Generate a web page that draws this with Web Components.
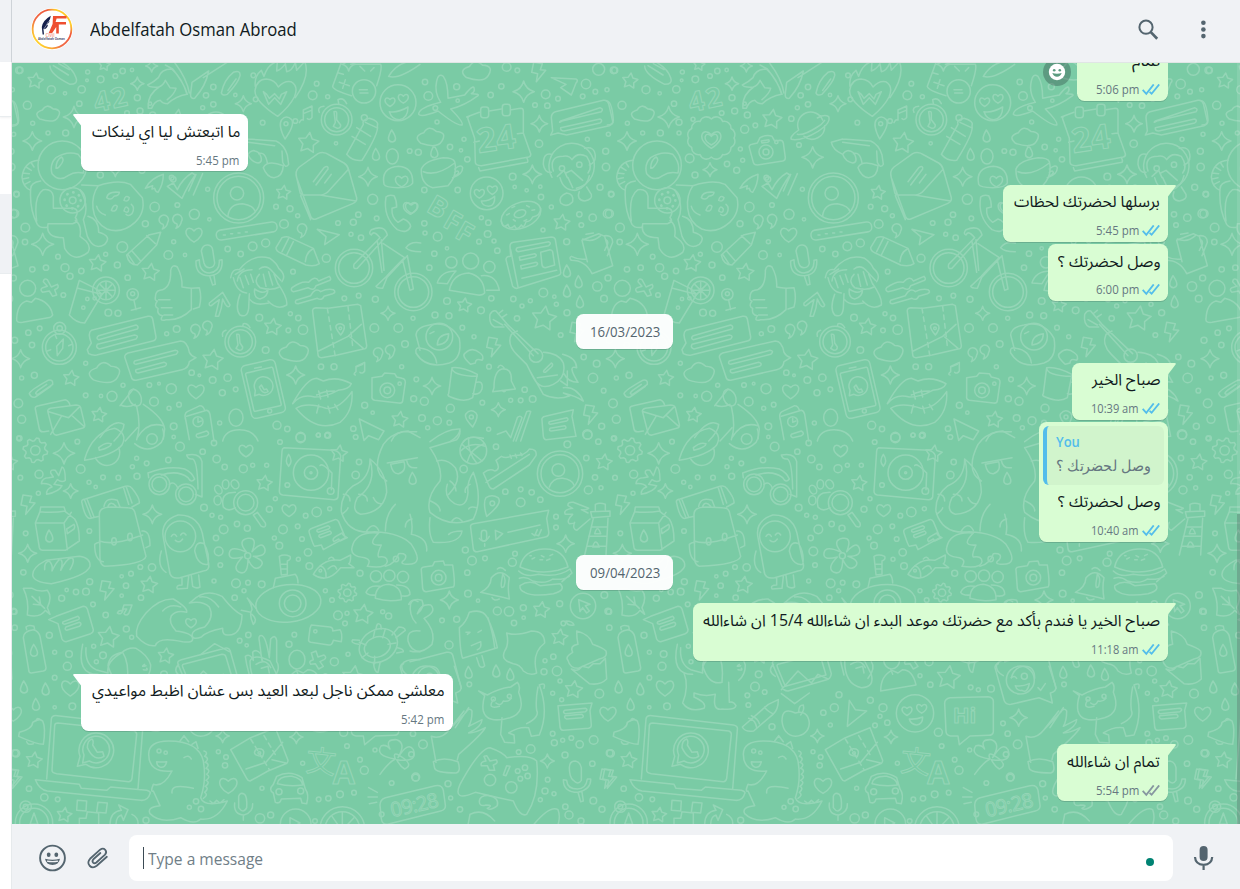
<!DOCTYPE html>
<html lang="en">
<head>
<meta charset="utf-8">
<title>Chat</title>
<style>
    html, body {
        margin: 0;
        height: 100%;
        overflow: hidden;
        font-family: "Open Sans", "Noto Sans", sans-serif;
        color: #111b21;
    }
</style>
</head>
<body>
<chat-app></chat-app>

<script>
const define = (name, html, setup) => {
    customElements.define(name, class extends HTMLElement {
        constructor() {
            super();
            this.attachShadow({ mode: 'open' });
        }

        connectedCallback() {
            this.shadowRoot.innerHTML = typeof html === 'function' ? html(this) : html;
            if (setup) setup(this, this.shadowRoot);
        }
    });
};

// ---------- wallpaper ----------

const n = (v) => Math.round(v * 10) / 10;

const star = ([x, y, r]) => {
    let d = '';
    for (let i = 0; i < 10; i++) {
        const a = (i * 36 - 82) * Math.PI / 180;
        const k = i % 2 ? r * 0.52 : r;
        d += (i ? 'L' : 'M') + n(x + k * Math.cos(a)) + ' ' + n(y + k * Math.sin(a));
    }
    return d + 'Z';
};

const spark = ([x, y, r]) => {
    const k = r * 0.2;
    return `M${x} ${y - r}Q${x + k} ${y - k} ${x + r} ${y}Q${x + k} ${y + k} ${x} ${y + r}Q${x - k} ${y + k} ${x - r} ${y}Q${x - k} ${y - k} ${x} ${y - r}Z`;
};

const heart = ([x, y, r]) =>
    `M${x} ${y + r * 0.9}C${x - r * 1.6} ${y} ${x - r * 0.8} ${y - r * 1.3} ${x} ${y - r * 0.4}C${x + r * 0.8} ${y - r * 1.3} ${x + r * 1.6} ${y} ${x} ${y + r * 0.9}Z`;

const bolt = ([x, y]) => `M${x - 14} ${y - 26}l26 4l-6 18l16 2l-28 34l4-24l-18-4z`;

const drop = ([x, y]) => `M${x} ${y - 18}q22 32 2 36q-22-2-2-36z`;

const cloud = ([x, y, r]) =>
    `M${x - r * 0.7} ${y + r * 0.45}q${-r * 0.6} ${-r * 0.5} ${r * 0.2} ${-r * 0.75}q${r * 0.35} ${-r * 0.6} ${r * 0.9} ${-r * 0.1}q${r * 0.8} ${r * 0.05} ${r * 0.4} ${r * 0.7}q${-r * 0.3} ${r * 0.55} ${-r * 1.5} ${r * 0.15}z`;

const quote = ([x, y]) => `M${x - 4} ${y + 8}a14 14 0 1 1 14-6q-2 14-16 20q6-8 2-14z`;

const gear = ([x, y, r]) => {
    let d = '';
    for (let i = 0; i < 32; i++) {
        const a = (i + 0.5) * Math.PI / 16;
        const k = i % 4 < 2 ? r : r * 0.78;
        d += (i ? 'L' : 'M') + n(x + k * Math.cos(a)) + ' ' + n(y + k * Math.sin(a));
    }
    return d + 'Z';
};

const badge = ([x, y, r]) => {
    let d = `M${x + r} ${y}`;
    for (let i = 1; i <= 12; i++) {
        const a = i * Math.PI / 6;
        d += `A${n(r * 0.3)} ${n(r * 0.3)} 0 0 1 ${n(x + r * Math.cos(a))} ${n(y + r * 0.84 * Math.sin(a))}`;
    }
    return d + 'Z';
};

const list = (s) => s.trim().split(/\s+/).map((t) => t.split(',').map(Number));

const section = (x, y, s) => {
    const dots = list(s.dots).map(([cx, cy, r]) => `<circle cx="${cx}" cy="${cy}" r="${r}"/>`).join('');
    const kinds = [['stars', star], ['sparks', spark], ['hearts', heart], ['bolts', bolt], ['drops', drop], ['clouds', cloud], ['quotes', quote], ['gears', gear], ['badges', badge]];
    const d = kinds.map(([key, fn]) => s[key] ? list(s[key]).map(fn).join('') : '').join('');
    return `<g transform="translate(${x} ${y})">${dots}<path d="${d}"/>${s.art}</g>`;
};

const doodles = [
    section(0, 180, {
        dots: `60,28,9 154,86,12 82,133,12 98,187,6 238,128,8 263,33,6 302,55,10 346,45,7 368,30,8 195,97,5 261,58,4 245,85,11
            396,27,5 412,110,9 420,150,9 450,128,5 618,103,8 640,78,8 640,130,8 706,102,5 760,43,7 767,115,7 788,185,7 950,68,7
            938,103,13 983,107,6 886,180,7 197,216,9 144,216,6 1008,247,5 1093,170,9 1229,270,7 464,438,14 532,432,7 583,460,15
            628,475,5 436,488,9 76,500,13 44,458,12 50,400,8 75,543,8 367,558,16 317,580,6 174,587,7 195,620,12 138,620,8 97,625,8
            210,646,9 244,630,8 352,612,9 505,582,13 555,582,5 521,542,6 383,650,8 683,564,8 722,579,8 758,556,13 797,546,12
            852,489,13 828,437,7 870,443,9 893,464,6 1118,415,15 1075,461,8 1130,472,7 1014,486,7 1053,520,6 1060,484,9 1083,530,8
            879,632,7 979,592,12 190,702,7 325,755,10 354,757,9 119,802,7 85,815,8 96,852,8 44,838,9 500,818,6 530,804,10
            778,770,10 871,758,6 895,771,8 865,808,7 909,806,14 797,867,10 1033,712,7 1076,704,7 1126,715,9 1123,801,13
            1195,801,13 1215,849,10 1205,917,6 963,917,8 1002,917,9 575,935,8 598,943,4 638,957,10 683,950,11 448,972,7 477,968,4
            514,983,15 336,1006,15 303,1005,5 257,1003,7 369,973,6 257,907,6 103,943,9 65,951,6 462,1022,13 507,1042,6 537,1031,7
            667,995,9 707,985,7 659,1086,6 521,1096,10 55,1027,13 65,1075,12 58,1132,8 831,1093,12 862,1104,8 1094,1033,9
            1118,1055,5 1060,1103,8 955,1123,6 982,1123,7 902,1128,14 1241,1013,9 301,342,9 520,355,8 623,385,6
            253,184,9 253,216,6 295,175,6 381,156,7 458,162,9 482,193,7 450,205,12 437,264,6 444,298,6 397,309,8 426,328,9
            285,292,13 590,173,8 613,252,7 515,350,7 608,140,6`,
        stars: '106,60,24 925,246,32 850,395,22 292,607,26 451,634,27 818,798,26 638,897,32 213,952,24 297,1062,23 1199,1076,25 313,12,18 532,175,30',
        sparks: '412,68,20 730,128,24 97,240,28 1104,347,28 128,550,33 62,893,27 1164,757,21 887,942,27 455,15,18 1046,10,20 222,168,32 346,326,21 654,289,32',
        hearts: '582,520,26 588,990,26 1231,440,22 1205,360,20 1170,122,16 1210,112,16 350,234,31 350,234,20',
        badges: '350,231,68',
        drops: '1175,225 1127,280',
        clouds: '145,158,36 314,935,48 882,872,46',
        quotes: '493,482 534,480 588,810 624,800 908,508 1136,880 1172,872',
        art: `
            <text x="280" y="144" font-size="82" textLength="100" transform="rotate(-12 330 110)">42</text>
            <path d="M464 260q-2-8 8-10l16-4l8-16q20-10 36-4l8 14l16-2q8 0 10 8l6 44q0 8-8 10l-76 12q-10 0-12-8zM500 240l22-4q4 6-4 8l-16 2z"/><circle cx="514" cy="273" r="21"/><circle cx="514" cy="273" r="9"/><circle cx="545" cy="243" r="5"/>
            <path d="M612 207a38 38 0 0 1 72-30M690 194a38 38 0 0 1-62 32M612 207q-28 20-22 28q30 6 80-24q40-26 32-44q-12-8-34 4M608 220q20 4 60-22q14-8 22-20"/>
            <path d="M150 15q0 25 60 55q25 0 18-20q-10-30-50-50M160 14l45 28M176 8l32 18"/>
            <path d="M445 142q-4-40 32-64q-30 2-34-6q20-10 32-22q8-26 40-26q32 28 46 76q-34 6-58 28q-16 0-22-10q-18 2-26 24zM496 12l22 12q34 42 44 76M520 0q40 50 48 96M476 78q14-4 20-20l14 22l18 2q-4 16-26 34"/>
            <path d="M572 98l4-34l50-34q-8 44-42 82q-14 2-12-14zM610 50l70-45M664 96q8-40 36-62q22-8 20 10q-4 20-38 56q-14 6-18-4zM684 88l24-34"/>
            <path d="M833 166q-70-46-68-78q6-34 34-34q26 2 36 24q18-20 38-16q24 14 10 46q-14 28-50 58zM766 76q-4-30 18-48l8 18q12-38 40-44l-2 28q14-4 26-22l4 24q16-2 26-28l4 24l24-26q18 40-28 108M790 92l16 38l18-20l18 20l18-38l-16 8l-6 14l-14-16l-16 14l-8-12z"/>
            <path d="M1024 4l-26 72q2 12 56 28M1052 10l90 0q6 12-12 64M1016 36l14 4M1018 64l30 10M1036 56l-8 26M1080 16l14 14M1112 30l10-10M1078 86h24M1080 96h24"/><circle cx="1092" cy="91" r="35"/>
            <path d="M1166 46q30-50 90-46M1166 46q30 10 94-36"/>
            <circle cx="1194" cy="125" r="54"/><path d="M1168 152q26 4 56-14q0 34-26 38q-22 0-30-24z"/>
            <circle cx="1010" cy="176" r="46"/><circle cx="1010" cy="176" r="36"/><path d="M1002 152q8-2 8 4l0 20l12 16q0 10-10 10l-12-6l6-12zM958 154q-8-16 14-18M1016 128l-2-12q16-8 26 12"/>
            <path d="M898 185q6-12 12-8v-30l26-12v34q-6 10-14 4M910 158l24-10"/><path d="M855 234q-22-42-10-58q14-16 30 0q10 16-20 58z"/><circle cx="858" cy="188" r="6"/>
            <path d="M36 120q16 0 20 58q0 14-18 14"/>
            <path d="M1040 280l50-90q-6-14 18-18q30 8 24 22q6 20-46 104q-28 4-46-18zM1056 226l40 24M1070 200l42 26M1096 184l34 16"/><ellipse cx="1177" cy="286" rx="18" ry="23"/>
            <path d="M1152 370q-10-50 44-54q44 4 42 50q-6 14-44 14t-42-10z"/>
            <path d="M1158 408q-10 60 34 98q30 14 40-10q-2-14-22-22l-16 10q-20-14-18-42l14-4q0-20-8-34q-16-4-24 4z"/>
            <circle cx="187" cy="313" r="73"/><path d="M156 338q-8-28 12-48q34-22 66-10q24 26 16 56q-26-6-46 8q-26 20-48-6zM168 322q0-24 16-34q12 8-4 26q-4 8-12 8zM116 298q-44 4-50 50q2 30 26 40M94 306l8 12M78 318l16 10M68 336l20 2M68 354l18-4M74 370l16-8M92 384q0-20 30-24M92 384q-4 62 20 106q10 14 32 8M110 480q-10-74 20-94q26-4 30 20l0 36l60 0q20 4 6 28q12 12-8 18h-74M144 490q-8 40 46 40l4 32q26 46 70 12q10-16-6-34l-18-14q6-34-14-48M240 386q30 50 10 90l12 50q20 44 52 24q24-24-18-36q0-40-32-48"/>
            <circle cx="218" cy="418" r="38"/><circle cx="218" cy="418" r="10"/><circle cx="218" cy="418" r="24" stroke-width="8" stroke-dasharray="1 18"/>
            <path d="M245 372l50 2q60-20 96-4l36 40q10 44-22 74q-40 36-84 20q-38-20-42-62q-4-40 16-68M320 410q4-20 38-16q0 10-16 12q-10 14-22 4zM290 436q4 18 26 26M334 448q8-22 18-12q-4 20-18 12zM372 418q4-18 16-8q-2 14-16 8zM372 450q4-20 14-6q0 16-14 6zM394 430q12 10 2 28q-12 10-18 2"/>
            <path d="M436 382q16-30 54-42q0 30-16 54q-8-2-10-12l-8 2l2-10zM502 376l18-10l12 20q16-34 44-50l10 6q-22 30-40 70zM566 390l22-50M580 402l28-64"/>
            <circle cx="716" cy="411" r="75"/><circle cx="716" cy="411" r="65"/><circle cx="711" cy="397" r="20"/><path d="M684 464q4-36 44-36q34 6 38 24"/>
            <path d="M744 234l84 6q24 10 34 42l4 28q-10 14-18-6l-2-34M744 244l80 10M744 280q12-20 34-4q14 28-4 30q-22-4-30-26zM744 280q-30-14-34-36l34-10M790 320q12-24 60-6q-2 34-28 36q-22-2-32-30zM776 278q20-8 26 28"/>
            <path d="M890 350q-6-20 8-32l56-40q16-8 34 4l44 24q10 6 14 20l24 84q2 12-12 18l-110 46q-10 4-16-8zM890 350l10 44q2 10 16 8l48 0q14-2 24-14l56-62M902 404l30 72M960 402l108 18M940 362l32-42q14-8 12 4l-36 48M974 366l20-26"/>
            <rect x="648" y="495" width="184" height="30" rx="14" transform="rotate(-9 740 510)"/><path d="M670 522h6M692 518h6M714 516h6M736 513h6"/>
            <path d="M380 582l66-60l36-8l-12 38l-58 60q-26 0-32-30zM396 570l26 30M440 524l26 24M384 580l20 30"/>
            <path d="M952 505l66 16l-44 30l4-24zM828 560l18-30q14-6 24 0l70 32l18 46q-14 10-40 4l-76-36q-14-6-14-16zM846 572l20-40M860 582l20-40M916 602q2-28 22-38"/>
            <path d="M604 570q4-20 20-18q12 2 14 14l6 40q-2 14-16 14q-12 0-16-14zM588 600q-2 46 42 44q40-4 36-48l-8 2q2 34-30 38q-30-2-30-40zM630 648l8 24l8-2l-4-26"/>
            <path d="M466 710q0-20 14-22q34-4 32-60q4-20 20-10q16 30 14 60q16 2 28 4l0 64q-34 34-76 30q-22 6-10-12q-18-2-14-22q-14-6-2-22q-8-2-6-10zM484 740h32M492 762h26M476 716h34M574 682l24-2q8 30 0 58l-18 6"/>
            <path d="M628 726l40-32l22 38q-4 12-14-2l-8-16q-2 26-12 52h-10l12-50q-14 10-24 18q-8 2-6-8z"/>
            <path d="M692 650q4-28 26-24q40-50 92-34q20 14 26 30q24 20 10 40M706 640l26-16M712 660q4-34 44-34M778 624q20-16 40 8l24 26M700 650q10 44 40 46M720 650l10 30M736 644l10 26M752 640l8 24M790 640l8 36M806 632l12 40M822 640l12 30M778 640q-20 20 2 40q36 10 58-2M764 684q30 20 40 0q0 24-24 30q-20-4-16-30zM720 700q-16 44 0 62q22 10 26-20l2-44M804 720q28 30 56 12q4-20-26-64M750 716q14 20 56 10"/>
            <path d="M876 680q30-22 50-16q20-22 30-4l32-14q10 10-4 14l-36 14q-6 18-24 6q-34 10-44 12q-10-4-4-12zM888 718l44-14q14-26 30-12q20-10 38-6q10 8-2 12l-26 8q-6 14-20 6l-58 16q-12 0-6-10z"/>
            <circle cx="1062" cy="621" r="56"/><circle cx="1062" cy="621" r="46"/><circle cx="1240" cy="693" r="56"/><circle cx="1240" cy="693" r="46"/><path d="M1062 610l78-80q-20-24-26-8q-10-4 0-16q40-16 48 16l-90 100q-14 4-10-12zM1132 542l14 92M1144 536l8 92M1150 548l64 42q-40 40-54 56M1160 650l62-66l18 100l-10 4l-22-90M1218 560q14-20 44-14M1218 560q10 12 44 12M1128 676l36-34l-16 40q-18 0-20-6z"/>
            <circle cx="83" cy="682" r="24"/><path d="M50 774q2-46 30-54l14 4l12-12q44 10 52 50q-4 8-14 8l-76 14q-20 2-18-10z"/>
            <path d="M142 656l12 22l18-8q8 10-8 16l6 16l-12 4l-10-16l-20 4q-10-8 0-14l14-4l-12-14q2-12 12-6z"/>
            <path d="M238 658l-30 104q20 24 46 24l52-86l-20-18zM234 682l70 18"/><circle cx="250" cy="740" r="5"/><circle cx="262" cy="714" r="5"/><circle cx="284" cy="712" r="5"/><circle cx="318" cy="688" r="40"/><circle cx="318" cy="688" r="28"/><path d="M318 662v52M292 688h52M300 670l36 36M336 670l-36 36"/>
            <circle cx="398" cy="700" r="17"/><circle cx="398" cy="698" r="6"/><path d="M402 718l6 28M394 748l28-8"/>
            <circle cx="178" cy="859" r="51"/><circle cx="178" cy="859" r="41"/><circle cx="179" cy="802" r="18"/><circle cx="179" cy="802" r="8"/><path d="M172 884l-2-28l20-22l-2 28zM142 870l10-4M216 850l-10 4M166 824l4 8"/>
            <path d="M266 878l-4-12l12-20q-12-30 0-38l170-42q12-2 14 8l10 54q0 10-10 12l-168 42q-12 2-24-4zM296 824l112-32q10 4 4 12l-116 32q-10-4 0-12zM292 850l112-28q14 2 4 12l-110 30q-12-4-6-14z"/>
            <path d="M376 894q-6-12 8-18l158-36q20 0 26 34q6 12 20 16l-20 12q-2 20-22 24l-138 32q-12 0-14-10zM404 900l122-32q14 2 2 12l-120 30q-10-2-4-10zM408 926l84-22q14 4 2 12l-80 20q-10-2-6-10z"/>
            <circle cx="721" cy="842" r="46"/><circle cx="721" cy="842" r="36"/><path d="M710 820q8-2 8 4l2 22l8 12q0 10-10 10l-10-6l6-10zM668 826q-4-14 10-18M728 796l2-8q12-2 20 12"/>
            <path d="M938 752q-2-10 10-12l36 2l90-12l8 4l18 120q0 10-10 10l-78 18l-48 8q-10 0-10-10zM956 870l88-44l40-36M1050 828l40 34M1022 822q-20-24-12-30q12-8 22 2q4 10-10 28z"/><path d="M982 742l24 146M1044 736l14 120" stroke-dasharray="14 12"/><circle cx="1021" cy="802" r="4"/>
            <rect x="738" y="903" width="104" height="162" rx="14" transform="rotate(-13 790 984)"/><rect x="748" y="926" width="84" height="118" rx="4" transform="rotate(-13 790 984)"/><path d="M764 1004l2-16a28 28 0 1 1 12 12zM778 978q10 24 26 14l-4-8l-8 2l-8-14z"/><circle cx="809" cy="1050" r="6"/><path d="M764 922l20-4"/>
            <path d="M878 1028q42-76 72-76l20 8q40-16 84 8q-6 16-40 20q-36 20-70 20q-40-12-66 20zM888 1042q32-20 90 0q40 4 78-50q4 60-36 92q-70 34-132-42zM950 1002q20-12 54-12M956 990l6 24M980 988l4 20M956 1032l-6 24M984 1036l6 20M1004 1030l10 16"/>
            <path d="M88 998q2-10 56-40q16-4 14 12l-44 30q-14 0 0-12l26-18M88 998q6 14 18 10l46-32"/><path d="M106 1044q-2-8 10-10l80-18q12 4 14 18M106 1044l12 60q2 10 14 8l14-2M144 1054q-4-8 8-12l76-10q10 0 14 8l12 50q2 10-8 12l-74 20q-8 2-12-6zM146 1052l60 18l34-34M152 1120l32-54M252 1096l-38-34"/>
            <ellipse cx="405" cy="1010" rx="18" ry="26" transform="rotate(-24 405 1010)"/><path d="M360 1034l40-50M362 1032q20 10 44-2M410 1036q14 60 0 100M430 1030q60 40 64 74l-4 30M300 1130q40-60 72-40q0 20-30 50M412 1130q30-50 78-36"/>
            <path d="M556 1074q-4-16 6-22l38-18q10 0 14 14M560 1066l60-18q8 2 10 12l12 80M556 1070l12 66"/><circle cx="594" cy="1082" r="15"/><path d="M590 1120l30-10q12 8 0 14l-26 6q-8-4-4-10zM594 1072v12l10-4"/>
            <path d="M1116 950l30-4l8-10l30 2l6 10l16 4q10 2 10 12l-8 56q-2 8-12 6l-72-8q-10-2-8-14z"/><circle cx="1162" cy="988" r="22"/><circle cx="1162" cy="988" r="10"/><circle cx="1199" cy="968" r="5"/><path d="M1066 942q-8-2 2-10v-16l26-12v26q-6 10-14 4M1068 918l20-8M1078 1074l74 36l-16 26l-30-12l-14 14z"/>
            <ellipse cx="708" cy="1070" rx="21" ry="26"/><path d="M668 1140q8-34 50-34t56 34M1174 1140q12-30 50-30l36 20"/>`
    }),
    section(0, 1290, {
        dots: `57,22,6 232,32,7 242,114,13 117,130,12 61,140,7 267,154,6 287,168,5 309,139,7 355,140,7 397,107,6 410,82,6 411,136,9
            440,97,7 505,87,8 521,18,5 540,47,13 608,62,8 642,36,8 650,84,11 674,108,8 730,113,12 758,103,6 800,103,6 840,33,7
            902,21,14 955,12,6 983,13,9 1077,93,8 1067,132,11 1067,18,7 826,203,6 115,187,6 612,230,10 636,253,6 662,259,6
            671,295,13 711,279,8 742,292,9 648,321,8 656,361,13 661,402,7 849,295,13 893,286,7 808,235,9 917,254,7 950,243,14
            989,233,6 823,321,6 838,344,10 906,324,7 924,364,11 895,385,6 928,405,10 77,307,7 268,300,7 421,408,7 456,409,11
            393,428,7 365,436,5 378,464,8 365,494,5 423,500,8 269,452,9 258,482,10 228,483,8 200,477,5 185,502,9 70,424,8
            279,520,7 317,552,8 379,594,9 395,619,6 148,613,9 164,664,6 207,669,10 202,706,12 281,646,6 309,673,10 289,692,6
            164,740,7 164,829,5 217,826,10 642,450,6 708,457,13 744,455,7 785,460,10 704,500,8 732,479,6 745,612,8 719,629,7
            740,643,5 883,611,7 867,640,9 1003,692,12 1044,670,6 1014,553,13 1041,547,6 1035,577,7 976,479,6 996,507,7
            1080,427,9 1188,384,8 1148,542,6 1166,555,9 43,542,8 44,590,8 48,967,11 87,1073,8 133,1099,11 173,1105,7 655,962,6
            678,978,7 675,1003,8 908,997,6 1041,945,7 1080,986,7 1125,957,6 1093,1018,12 1062,1085,7 1020,1090,10 985,1102,8
            956,1105,7 786,1072,6 780,1162,14 812,1152,9 588,1111,8 603,1134,8 568,1129,6 438,1168,9 1175,1056,7 1247,1040,10
            945,1170,7 1145,1150,7 481,767,13 510,783,7 458,793,7 461,822,7 532,887,9 733,791,9 719,830,12 686,845,8 707,882,6
            827,808,9 865,830,12 856,856,6 878,875,8 841,883,7 1031,904,12 976,734,6 1007,761,8 492,730,10 1128,769,7 1151,776,6
            1189,773,10 1225,877,7 1239,908,8`,
        stars: '793,157,24 447,462,26 325,619,33 497,675,24 1089,550,30 102,988,25 193,1152,23 1017,68,26 1061,740,36',
        sparks: '192,67,32 212,180,22 457,250,28 83,367,27 668,915,20 889,918,20 1272,860,26',
        hearts: '867,237,22 211,770,28 685,1062,28 738,58,22 573,575,17 937,839,16 981,832,16',
        bolts: '83,218 320,475 44,1040',
        drops: '71,768 136,774 107,820 147,315 101,658 1237,142',
        gears: '106,58,37 1042,485,28',
        art: `
            <circle cx="106" cy="58" r="14"/><circle cx="1042" cy="485" r="11"/>
            <path d="M254 84q24-80 90-92q40 16 22 50q-24 30-112 46zM296 50q20-18 38-12q0 10-36 20zM286 80a38 38 0 0 0 70-30M376 30l36-40M404 38q40 34 80-4q12-20 4-40"/><circle cx="456" cy="24" r="16"/>
            <path d="M152 126q-2-12 14-8l10 16l10-26q10 2 10 40q-10 8-24-2l-10 14l24 4q-8 18-46 26q-2-16 16-22q-8-12-32-10q2-18 22-18l14-2z"/>
            <path d="M122 228l70 0l4 12q-36 6-76 2zM120 242l-14 34l12 74q2 8 10 8l68 0l42-28q0-46-14-66l-28-22M106 276h86l22-32M192 276l10 80M200 294l22-14q4 6 0 14l-20 14z"/>
            <path d="M246 216q-4-10 10-12l120-38q14-4 20 6q24 30 22 44l-22 12M246 216q10 50 26 46l26-6M254 208l20 52M262 206l20 52M370 168l16 52M378 166l18 50M298 250q0-22 36-22l50 2q16 0 20 12l34 134q-6 24-124 30q-14-4-14-24zM298 330q40 14 112-12l18-6M312 226q6-30 40-18l8 20M324 226q8-18 24 0M284 340q10-8 16-4M284 340q0 50 26 52M426 300q24-4 24 44l-12 6"/><ellipse cx="342" cy="331" rx="7" ry="11"/><ellipse cx="390" cy="318" rx="7" ry="11"/>
            <path d="M98 432q-2-22 40-44l100-12q34 4 32 30q-10 30-116 52q-54-4-56-26zM134 416q-2-24 14-26q12 14 8 30q12-26 24-36q12 6 2 34q16-34 32-38q14 4-4 36"/>
            <path d="M70 472l26 0q20 12 46 6q16 20 0 52l8 20l-14-12q-16 24-54 14q6-44-12-80zM96 496l38 36M100 520l22 2l-4-24"/>
            <path d="M146 566l22-10l82-30q8 0 12 8l18 62q0 8-8 12l-74 24q-8 0-12-8l-12-46zM190 572l44-16q8 6 0 10l-40 14q-10-2-4-8zM198 588l40-14q10 4 0 12l-38 12q-8-2-2-10z"/>
            <path d="M352 546q4-10 14-6l6-18l24 0l-10 26q-8 8-14 0l8-14l-10 0q-4 20-18 12z"/>
            <path d="M70 620q0-20 30-24q16 4 20 20l18 94q0 8-8 10l-36 6q-8 0-8-10zM80 596l-2-8q8-8 24-2l2 10"/>
            <circle cx="478" cy="160" r="31"/><circle cx="478" cy="160" r="22"/><circle cx="558" cy="190" r="31"/><circle cx="558" cy="190" r="22"/><path d="M446 140l-2-14q60-24 110-12q22 10 30 30q-10 14-20-4q-30-24-80-8M508 160q16-12 26 12M560 72q40-8 46 20l0 106l-20-8M560 72q4 14 18 12q14 6 16 90"/>
            <path d="M490 320q-10-50 44-68q66-2 76 70l16 76q4 20-16 22l-70 20q-30 6-32-22zM484 360q-14 46 14 64M584 360q4-32 28-22q18 30 12 62q-22 4-34-20zM546 440l0 22q-20 0-14 12l30-2l4-36M574 434l4 32q12 8 22 2l-4-36M514 316q8-12 16 0M542 312q8-12 16 0M526 328q12 10 22-4"/><circle cx="541" cy="316" r="46"/>
            <ellipse cx="655" cy="176" rx="10" ry="14" transform="rotate(-30 655 176)"/><ellipse cx="677" cy="160" rx="10" ry="14"/><ellipse cx="705" cy="160" rx="11" ry="14" transform="rotate(-30 705 160)"/><ellipse cx="653" cy="208" rx="11" ry="14"/><circle cx="737" cy="215" r="36"/><circle cx="737" cy="215" r="25"/><path d="M670 228q-8-34 16-42l20-2M670 228q14 16 36 2M760 252l24 34q16 6 12-10l-24-32z"/>
            <path d="M852 50l150 8q16 4 20 16l-8 124q-2 8-12 8l-154-14q-10-2-10-12l8-120q0-8 6-10z"/><circle cx="933" cy="125" r="53"/><circle cx="933" cy="125" r="20"/><circle cx="933" cy="125" r="3"/><path d="M960 104q6-10 36 22l-2 50M866 70q-14 20 0 36q14-16 0-36z"/><circle cx="992" cy="180" r="10"/><circle cx="862" cy="162" r="7"/>
            <path d="M1110 84q50 40 50 100q-10 60-78 66q-30-10-10-50q60-40 38-116q0 60-50 80q-40 30-36 78q20 70 100 60q80 4 110 38q40 60-10 60q-30 0-10-14q12-20-18-18q-10 30-40 38M1160 150q-50-30-10-110q20-30 60-38l40 0M1162 96l90-16M1172 100l40-8q8 30-16 36q-18 2-24-28zM1220 88q4 26 30 22M1056 350q10-50 80-44q-40 40 8 36q-14 30-8 36q26-4 26 14q-4 22-60 14q14-20-8-26q-44-4-38-30zM1030 190q20 0 20 20M1026 250q18-14 18-20M1100 300q20-30 36-2M1156 300q0-50 30-80M1076 190q26 0 26 20M1120 200q10 20 24 18M1216 288q0-20 20-24"/>
            <path d="M928 306q-4-10 8-14l68-26q8-2 12 6l20 48l-66 36l-6-14l-20 4q-4-2-16-40zM952 296l32-12q10 4 2 10l-30 10q-8-2-4-8zM958 312l32-12q8 6 0 10l-28 10q-8-2-4-8zM1008 316l18-10q4 10 16 14l-22 10l-4-6l-14 8q-8-8 6-16z"/>
            <path d="M740 364q-30-36 4-42q30-4 12 40q30-34 38-10q8 24-34 24q40 14 20 32q-20 14-36-24q0 50-26 40q-24-12 10-46q-44 12-40-12q4-24 52-2z"/><circle cx="743" cy="374" r="9"/>
            <ellipse cx="865" cy="517" rx="98" ry="56" transform="rotate(-6 865 517)"/><circle cx="878" cy="517" r="40"/><circle cx="878" cy="517" r="25"/><path d="M820 470l6-28l60-12q8 8 8 26M838 376q14-8 32 0q4 10-8 14l0 40l-18 2zM844 400h16M844 414h16M768 532q-34-40-24-28q12 20 12 32q-10 14 4 44q14-14-4-30M752 544l-28-6"/>
            <path d="M940 430q30-50 80-42l32-16q0 24-6 26l16 12l-40 0q-40 50-82 20zM960 404q20 6 18 34M984 414q20-20 26 0M986 384q10-12 18 4"/><circle cx="961" cy="419" r="4"/>
            <circle cx="1128" cy="436" r="17"/><circle cx="1168" cy="434" r="17"/><circle cx="1209" cy="438" r="17"/><path d="M1126 502q0-40 40-42q40 6 38 46q-40 8-78-4zM1098 484q10-24 42-18M1190 462q40 0 40 28q-8 8-26 4M1098 484q6 10 28 8"/>
            <path d="M1226 520q10-20 28-8M1232 514q-6 40 16 62M1260 600q-40-6-36 30q8 30 36 32M1206 700q10-16 54-14M1206 700q-6 20 20 34"/>
            <path d="M930 592l4-10l56 6q10 2 8 12l22-4q8 10 4 36l-24-4q-4 16-14 14l-54-8q-8-2-6-10z"/><circle cx="946" cy="601" r="5"/>
            <ellipse cx="1135" cy="644" rx="60" ry="48" transform="rotate(-30 1135 644)"/><ellipse cx="1132" cy="648" rx="40" ry="30" transform="rotate(-20 1132 648)"/><path d="M1124 600l-4 20M1156 594l-8 26M1078 634l20 8M1086 680l18-14M1124 676v22M1164 640l24-4M1176 612l20-24q18 0 20 10l-28 22M1128 596q2-26 14-14l2 12M1076 640q-26-4-18-14l20 2M1120 694q4 32 14 30l6-28M1192 650q20 4 18 12l-20 4"/>
            <path d="M410 616q-6-30 28-70q40-44 82-42q44 26 40 40q-30-8-46 10q-10 20 14 46q50 6 50 24q0 12-30 8q-30-6-46-6q-30 0-36 18q-28 4-56-28zM488 540q20-24 54-12M576 510q40-40 90-14q36 46 60 56q-2 60-40 60q-20 2-18-20q-50 10-64 26q-26 10-28-6q0-16 38-24q30-30 14-60q-20-20-60-12zM600 498q30-6 56 30"/>
            <path d="M786 690l-8-60q-4-18 8-16q12 4 22 66l4-56q14-16 18 4l0 64q14 20-10 50M740 700l-4-24q14-10 24 12l-2-24q10-12 24 4l6 22M740 700l8 32M768 700q28-20 44 10"/><ellipse cx="891" cy="686" rx="24" ry="28"/><path d="M888 714l6 16"/>
            <path d="M948 660l6 18l18-6q10 8 0 14l-12 6l10 14l-14 8l-10-16l-14 2q-8-10 8-14l-6-20z"/>
            <path d="M248 640q-20 90 46 90M258 650q-4 50 30 66l36 10q-6-34 40-60q20-18 44-14q36 20 44 50q0 30-20 46M324 704q4-34 44-40q20 30 14 90q-40 10-58-50M434 700q-14 10 4 4M430 716q16 4 10-4M268 726q16 40-4 90q20 30 64 16q10-16-30-34v-12q30 12 64 4q-10 50 20 44q40 4 42-10q-8-14-20-10l-2-60"/>
            <path d="M534 700q-4-10 10-14l130-34q12-4 16 6l20 70q-2 16-14 18l-116 34q-14 0-18-14zM548 708q-4-8 8-10l110-28q10 0 12 8l16 54l-122 34zM600 672l44-34l44 24M560 776l50-56l40 36l20-26l30 14M560 788l40 30l44-32M536 700q-20 20 6 36"/>
            <path d="M750 690q12-24 60 0l20 40q10 40-30 40q-50-10-50-80zM858 780q0-46 34-62l18 8l14-10q30 0 40 46zM784 712l20-6l4 20"/>
            <path d="M58 904q40-10 40-30q20-14 30-4q10 20 2 70q-20 0-74-24zM108 870q2-14 16-2M80 932q4 12 20 6"/>
            <path d="M443 888l78-68l30-14q0 30-16 44l-58 50q-26 4-34-12zM462 862q20 4 24 28M470 854q20 8 24 24M510 828q4 10 24 20"/>
            <path d="M602 846q-40-20-40 24q4 42 40 46q40-4 42-40q-4-40-42-30zM612 842q0-20 14-20q4 16-8 30"/>
            <path d="M764 808l18 28l34 4l-58 46z"/>
            <circle cx="961" cy="847" r="56"/><path d="M944 864q20 2 40-6q0 22-18 24q-18-2-22-18z"/>
            <path d="M1066 800l114-3q16 2 16 14l0 92q-2 10-14 10l-56 2l-32 26l-4-26l-22 0q-14-2-14-14l-4-84q0-14 16-17z"/><text x="1074" y="876" font-size="66">Hi</text>
            <path d="M1201 710q0-10 10-12M1201 710l28 100q6 12 20 10l84-20l40 16l-6-30q20-6 16-20l-20-60"/><circle cx="1277" cy="747" r="42"/><circle cx="1289" cy="736" r="9"/><path d="M1262 764q20 4 42-6q-6 30-22 20q-14 4-20-14zM1250 740q10-8 16 2M1330 770l8 8l14-20"/>
            <path d="M154 864q2-12 18-10l244 28q14 2 12 14l-14 178M154 864l-14 180M164 884q0-8 10-8l228 24q8 2 8 10l-14 132q-2 10-10 10l-216-24q-14-2-14-10zM106 1046l132 14l6 12l76 6l12-10l108 10q14 4 10 10q-6 22-28 20l-280-28q-24-4-36-34z"/><path d="M232 1006l8-30a52 52 0 1 1 18 24zM248 996l4-24a40 40 0 1 1 16 18z"/><path d="M262 950q20 44 50 26l-4-14l-16 2l-14-22q4-12-2-18q-14 4-14 26z"/>
            <path d="M446 970q0-40 60-40q90 0 104 60q10 60-8 110q10 30 80 10q-30 60-80 54q-20 20-60-4q-60 20-92-12q-10-20 30-24l-20-44q-10 4 0-20q30 10 56-40q-70 6-70-50zM470 992q16 2 30 0q-4 20-20 16q-10-4-10-16zM552 980q14-10 22 4M516 1086q-4-30 64-14M540 930l12-16l14 18M576 940l12-8l6 20M612 960q14 4 2 16q16 6 2 18q16 6 2 18q16 6 2 18q14 8-2 18q14 6-2 18q12 6-2 18q12 8-4 18M630 1110l10 8l10-10l10 8l12-10"/><circle cx="477" cy="960" r="6"/><circle cx="497" cy="965" r="5"/>
            <path d="M692 956l60-36l74-30l38 98q0 10-10 12l-50 20l-54 30q-6 0-10-8zM738 1014l60-20l50-60M816 986l42 10M788 976q-28-2-24-14q4-12 20-8q12 4 4 22z"/><path d="M752 924l56 92M792 914l36 60" stroke-dasharray="14 12"/><circle cx="778" cy="966" r="4"/>
            <path d="M820 1086q-16-10 0-26l10-24q40-20 76 4l10 34q12 16 4 44l-14-2l-4-14l-58 2q-4 16-18 10zM832 1058q4-24 44-22q30 6 32 26q-40 6-76-4z"/><circle cx="837" cy="1082" r="9"/><circle cx="902" cy="1080" r="9"/>
            <text x="918" y="1024" font-size="90" style="font-family: 'Noto Sans CJK JP', sans-serif; font-weight: 400; stroke-width: 3" transform="rotate(6 960 990)">文</text><text x="998" y="1060" font-size="96">A</text>
            <path d="M1186 984q-64-10-42-40q16-4 26 10q-16-30 20-28q30 10 4 54q30-50 46-24q14 40-50 30q10 20 24 28q24-10 0-30q-40-30-28 0q-20 10-46 46"/>
            <path d="M716 1096q4-14 18-6q8 8 6 40q-10 20-24 0zM704 1116q-4 34 28 36q28-8 26-34M730 1152v16"/>
            <circle cx="102" cy="1175" r="56"/><circle cx="102" cy="1175" r="43"/><circle cx="77" cy="1127" r="17"/><circle cx="77" cy="1127" r="7"/><path d="M90 1180l12-34l12 34z"/>
            <path d="M232 1108l28 2l-2 30l-28-2zM294 1114l28 2l-4 30l-28-2zM262 1142l34 4M262 1142l-4 20l-20 0v20M296 1146l0 34M330 1182q0-40 34-44l-8-16l28 14l-14 32l-6-16q-16 4-16 30M396 1150q20 10 18 30"/>
            <circle cx="887" cy="1180" r="46"/><path d="M870 1160l30 16l-30 18z"/><circle cx="1027" cy="1194" r="67"/><circle cx="1027" cy="1194" r="52"/><path d="M1027 1190v-46M1020 1190l-24-34M1034 1190l28-30"/>
            <path d="M1106 1070l26 14M1104 1098l28 0M1108 1118l22-4"/>`
    }),
    section(1230, 180, {
        dots: `45,63,8 140,77,9 55,105,13 76,141,7 143,119,5 242,102,8 274,76,8 290,18,13 322,28,7 407,100,13 375,132,7 412,134,8
            444,113,7 518,106,7 528,69,14 556,92,7 591,86,6 566,25,18 611,28,10 81,183,6 162,235,6 120,258,8 153,268,5 25,274,9
            172,295,8 387,248,11 308,347,10 314,378,5 350,388,5 391,377,5 393,408,8 532,235,6 595,220,6 587,271,9 588,318,11
            570,379,9 603,399,8 43,387,8 143,387,8 424,438,6 508,460,8 548,470,11 593,458,13 514,492,7 399,507,6 214,470,6
            235,485,8 233,519,10 207,542,7 252,540,6 262,569,8 43,487,8 45,516,6 83,527,13 111,562,5 73,578,8 58,620,8 470,542,9
            562,676,14 594,651,9 582,713,10 400,695,13 433,707,5 439,730,6 361,719,6 310,714,8 336,735,6 321,772,8 244,712,8
            213,748,10 111,720,10 117,764,9 75,762,9 157,800,7 9,772,6 192,827,6 471,755,9 452,822,7 521,888,8 560,908,10
            549,951,14 581,989,7 237,917,7 19,955,7 43,1021,12 121,1042,12 217,1025,7 302,1018,6 332,1018,7 368,1014,10
            344,986,8 36,1071,10 82,1079,12 118,1085,7 53,1100,6 236,1105,6 575,1096,9 532,1120,14`,
        stars: '455,485,25 163,733,22 402,773,38',
        sparks: '341,92,32 388,188,25 367,340,28 66,975,26 265,1046,21',
        hearts: '208,397,16 247,386,16 5,440,20',
        bolts: '385,30 250,855 500,810 541,1058',
        drops: '470,630 505,662 470,690 509,722 72,272',
        clouds: '62,228,42 200,30,44',
        art: `
            <path d="M80 60q4-24 20-14q14 20 14 66l50-10q24-30 28-22q4 12-8 18q26 0 20 6q-40 30-82 40q40 40 34 48q-14 4-72-42q-50 20-58 10q0-20 66-36q-20-30-12-64z"/>
            <path d="M170 168l38-14M238 150l36-6M304 146l28-4q8 0 8 8l0 66l22 62q2 8-6 10l-142 26q-18 0-18-10l-2-72l-20-58q-2-6 4-8M192 244l16-4M322 218l18-2M206 320l4 10l142-26q4-4-2-14"/><rect x="212" y="138" width="24" height="32" rx="8"/><rect x="277" y="130" width="24" height="34" rx="8"/>
            <text x="200" y="268" font-size="102" transform="rotate(-8 260 230)">24</text>
            <path d="M422 222l6-12l-4-40q0-14 12-18l144-34q12-2 16 10l12 52q2 10-10 14l-128 28l-26-6zM452 180l118-40q12 4 4 12l-118 28q-12 8-4 0zM452 200l118-26q10 4 0 12l-108 24q-12 0-10-10z"/>
            <path d="M424 50l74 4q8 4 0 12l-14 36l-32-22l16-10zM34 324q10-26 66-34q30 0 34 12q10 40-20 72l-46 6q-36-10-34-56zM40 332q40 16 94-26M134 324q20-16 24-4q0 20-30 30M134 334q10-8 12 0q-2 8-12 10"/>
            <circle cx="230" cy="397" r="49"/><path d="M214 420q20 2 40-14q2 28-18 30q-20-2-22-16z"/>
            <ellipse cx="333" cy="463" rx="62" ry="38" transform="rotate(-22 333 463)"/><ellipse cx="330" cy="458" rx="18" ry="11" transform="rotate(-20 330 458)"/><path d="M274 480q4 26 20 10q4 18 20 4q6 18 20-2q8 12 14-10q14 0 20-14q24-4 24-26M290 462l8-4M306 440l8-4M350 434l8 4M366 448l8-2M342 480l8-4M310 476l6 4"/>
            <text x="56" y="470" font-size="82" transform="rotate(30 90 440)">B</text><text x="106" y="510" font-size="82" transform="rotate(30 130 480)">F</text><text x="144" y="542" font-size="82" transform="rotate(30 165 510)">F</text>
            <circle cx="485" cy="315" r="68" stroke-dasharray="340 90" transform="rotate(150 485 315)"/><path d="M424 280q-24-6-24 30q4 26 24 24M524 262q30-8 32 24q0 20-18 26M430 330q-14-44 30-44q16-4 26 10q16-24 44-10q20 30 4 50M442 346l20-18l10 22M468 336l16-8l34 30M474 350l14 30M450 350q10 40 48 38q34-10 40-44M470 396q-26 10-18 30q18 16 36-4q4-24-18-26M508 392q-10 24 16 28q24-4 20-20l-14-22"/><circle cx="456" cy="322" r="8"/><circle cx="508" cy="311" r="8"/>
            <path d="M300 556q0-10 10-12l114-16q10 0 12 8l16 96q2 10-10 12l-116 36q-10 6-18-4l-20-80q0-10 14-10zM302 566l22 112M322 560l94-18q10 4 0 12l-92 18q-10-4-2-12zM328 588l46-10q10 4 0 10l-44 10zM332 614l46-10q10 4 0 10l-44 10zM336 652l104-24M392 574l28-8q6 0 8 6l6 40l-28 8q-8 0-10-8z"/>
            <path d="M516 538l50-20l18 8l24 88l-62 24q-20-40-62-40q-8-8 0-12q24 12 46 8zM518 534q30 12 54-10M528 520l22-4M584 524q24-2 24 20l-16 40M588 536q8 4 4 16l-8 16M516 538l16 64"/>
            <circle cx="124" cy="604" r="17"/><circle cx="182" cy="600" r="24"/><circle cx="238" cy="618" r="17"/><path d="M118 688q10-50 58-52q46 10 48 60q-6 8-20 6zM82 666q10-36 56-36q-10 10-26 38zM214 644q44-6 54 44l-38 0"/>
            <path d="M240 760q8-14 18-10l34 40l92 88M284 790l86 94M240 760q-4 30 14 38l28 0M250 776l28 16M268 756l10-8M278 768l12-8M304 820q-14 30 16 60l30 30l20 40q20 40 60 20q40-20 30-64q-14-30-60-32M304 820l18-10M382 950l60-8M402 928l22-22q8 4 0 12l-18 16q-8 0-4-6zM458 880q40 10 42 40q-30-10 4 44q-30 0-42-26M472 930l0 44l-20-14M360 930l40 70q40 20 80 4l-20-8q40 10 60 24q-20-44-60-40"/><circle cx="378" cy="884" r="20"/>
            <path d="M18 822q2-24 40-30q60-14 90 40q10 60-30 74q-70 20-100-30q-4-20 16-14q40 6 46 44M18 822l12 46"/><circle cx="88" cy="827" r="40"/><path d="M82 852q0-30 34-34q0 30-34 34zM60 818l12-6"/>
            <path d="M182 910q-30-26-16-34q20-20 44 0q14 10 6 22q-20-8-20 8z"/>
            <path d="M126 920q30-4 76 20l-14 70q-24 16-66-2q-12-4-6-10zM126 920q0 24 76 26M200 964q20-6 16 20q-8 20-28 14"/>
            <path d="M252 980q0-50 24-56q30-4 28 36l12 24l-68 8zM264 920q6-14 18 0M276 988q6 8 12 0"/>
            <path d="M262 1120l26-10l14 20l20-60q8-8 14 0l-26 70M318 1140l32-88q8-4 12 0l-30 88M396 1078q-2-10 10-12l84-20l-4 20l12 60l-90 10q-6 0-8-10zM418 1082l52-12q8 4 0 10l-48 10q-8 0-4-8zM420 1102l44-8q8 6 0 10l-40 6q-8 0-4-8z"/><path d="M188 1098q-28-30-20-40q14-16 30-2q10 10-10 42z"/><circle cx="184" cy="1068" r="6"/>
            <path d="M60 1142q50-40 90-38q0 20-30 38M160 1142q14-20 60-10"/>`
    }),
    section(1230, 1290, {
        dots: `258,47,8 472,40,10 565,32,8 533,12,13 529,81,8 555,139,8 573,170,6 535,177,12 286,182,8 332,175,7 365,184,8
            332,214,13 391,206,8 161,114,11 438,257,7 438,289,7 166,357,9 186,389,13 225,382,7 307,394,12 315,368,7 172,425,8
            174,488,10 204,509,5 262,540,12 297,541,14 340,530,9 341,560,5 312,576,8 449,518,9 460,577,7 594,541,9 583,492,10
            96,568,7 140,565,9 117,642,12 178,760,7 405,689,6 430,677,8 402,722,9 441,720,14 450,750,6 455,806,6 428,787,6
            568,788,13 428,908,7 433,935,9 458,928,6 484,921,7 509,940,11 551,927,13 465,972,9 599,966,10 547,998,8 326,963,7
            362,954,13 413,1046,7 405,1080,9 432,1088,6 391,1106,6 466,1127,8 477,1152,12 513,1170,9 550,1109,10 576,1135,9
            39,940,13 17,1038,12 114,1058,9 122,1101,6 150,1135,8 4,970,8`,
        stars: '582,94,25 394,537,25 449,619,25 491,776,27',
        sparks: '467,338,26 118,507,27 412,990,21',
        hearts: '594,847,26',
        bolts: '590,1040',
        drops: '175,724 258,720 300,730',
        art: `
            <circle cx="190" cy="59" r="40"/><path d="M156 40l60 50M176 22q-4 40 24 74M152 60q30-30 74-14M172 92q10-40 50-54"/>
            <path d="M258 88l16-12q14 8 34-2q40 0 50-20q24 0 20 20l-20 28l-108 72q-10 0-14-12l-16-36q20-16 34-6q20-4 4-32zM228 154l130-84M300 72l4 10M316 70l4 10M332 66l4 8"/>
            <circle cx="450" cy="128" r="68"/><circle cx="450" cy="128" r="57"/><circle cx="445" cy="117" r="19"/><path d="M418 168q10-28 40-26q28 4 34 20"/>
            <path d="M230 256q-12-40-2-56q18-12 36 0q16 16-34 56z"/><circle cx="247" cy="217" r="7"/>
            <path d="M60 50l80-24q10-10 10-26M60 50q40 60 30 100q-44 50-30 94q60 50 130 20q30-60 0-140q-20 30-16 60q-4 50-40 34q-34-20-22-58M80 90q30-10 56 20q20 40-20 80M62 210q30 14 28 30M120 150q16 10 18 30M180 160q-18 10-14 24M200 230q-20-6-24 4M126 270q14-20 30 0M0 250q10 30 4 60q50 10 46 50M60 260q-6 50 10 74q80 6 86-34q-30 0-40 10"/>
            <path d="M182 290q-2-10 8-12l226-40l-6 24l6 40q2 14-10 16l-204 44q-10 2-12-8zM256 298l22 10l-20 18zM294 304l96-22M366 308l8 6l8-18M378 312l8 2l8-18"/><rect x="214" y="298" width="16" height="32" rx="8"/><path d="M208 322q14 20 30-6M224 338v8"/>
            <path d="M490 214l46 18q-8 6-22 4l20 10M490 214q-18-2-16 10l14 8q-30 4-22 18h22q-20 20-10 28q16 0 16-4q-8 20 6 24l40-34M542 242l4 18l54-4l0-16zM556 238v-18q14-6 30 0v16M550 262l-26 110M594 262l-6 110M544 288h46M536 316h52M530 346h58M554 308q8-30 18 0zM548 348q8-30 20 0z"/>
            <path d="M330 408q10-50 70-54q60-4 74 54l-30 10q-60 14-114-10zM326 420q20 20 60 10q60 10 94-16l6 12l-30 26M328 442q20-8 40 8q40 10 60-6q30 4 50-8M330 464q30-20 60 0l60-6q20 20-20 30q-60 10-86-4q-16-6-14-20M366 384l8-4M394 374l8 4M420 374l8-4M390 386h8M410 388l10-4M360 374h4"/>
            <path d="M212 484q30-14 32-44q26-30 54 0q-6 30 0 64q-30-8-86-20zM262 414q10-10 24 4M246 500q6 12 22 4M278 430q12 10 4 36q-10 10-8-10z"/>
            <path d="M34 418q-2-8 8-10l26-4l6-12l26-2l4 12l24 0q10 70 0 66l-80 14q-8 0-10-10z"/><circle cx="86" cy="440" r="22"/><circle cx="86" cy="440" r="10"/>
            <circle cx="519" cy="525" r="38"/><path d="M506 506l34 14l-14 4l12 16l-8 6l-12-16l-8 12z"/><path d="M468 570q20 0 24 12q-20 4-24-12z"/>
            <path d="M148 590q20-14 30-46q40-12 54 16q20 40 30 90l-104 32q-8-20-10-92zM234 560q16 50 20 90M168 604l12 0l-8 6M204 604l10 -6M184 644l28-12q4 20-10 24M200 680l8 24q8 10 16 0l-8-30"/><path d="M0 520q10-20 36-12q10 20-14 40q10-30 40-26q20 20-20 40l14 18q20 30 10 60q-30 30-66 20"/><path d="M0 692l110-28q14-2 18 8l26 100M20 740q10-34 40-34t30 36"/>
            <path d="M290 606q30 10 74-6q40 0 40 36q-40 30-24 90q-20 10-40-6q-10-20-30-22q-40-10-26-38q14-20 6-54z"/>
            <path d="M474 688q-10-10 14-24q-10-20 16-24q-4-20-4-40q40 10 48 40q30 10 40 20q6 20-20 24l-64 28q-24 0-30-24zM484 714q20 10 32-8l20 4l14-12l20 0l16-16l4 62q-20 20-52 14z"/>
            <path d="M206 780l26 12q36-20 70-24l20-14q10 10 4 30q24 60-26 76q-70 20-80-20q-4-20 4-46zM258 816q14 12 22-6q14 4 24-8M250 806q-20 30 18 20M276 860l-4 50l12 24l30 2l-2-24l-16-6q30-20 60-16l8 26l24-4q30-70 0-150q20-10 14 10M350 878q40-20 30-40q-4-30 4-70"/><circle cx="250" cy="804" r="6"/><circle cx="298" cy="796" r="6"/>
            <path d="M444 824l102-8l-6 22l4 44q0 8-8 10l-76 6q-8 0-10-10zM464 838l62-6q10 4 0 10l-60 6q-10-4-2-10zM466 854l50-4q8 6 0 10l-46 4q-10-4-4-10z"/>
            <path d="M64 916q30 10 54-20l50-52q10-16 18-4q0 30-10 46l40-20q0 20-40 40q20 0 50-16q-10 20-80 80l-4 16M64 916l14 78M70 992q30-16 74 0q10 30-6 34q-60 0-64-14zM118 896l44-56M136 890l40-60"/>
            <path d="M150 1060q60-110 90-110q40 14 50 30q70-10 90 10q10 100-30 160q-20 10-40-40l-44-10l-70-16q-70 30-46-24zM230 974l10 16l18-4q10 10-8 16l4 16l-16 0l-6-14l-18 0q-4-12 14-14l-6-14zM290 1004l10 2l-12 28l-8-2z"/><circle cx="240" cy="1047" r="17"/><circle cx="304" cy="1069" r="17"/><circle cx="345" cy="1010" r="8"/><circle cx="323" cy="1020" r="7"/><circle cx="353" cy="1035" r="8"/><circle cx="331" cy="1043" r="7"/>
            <path d="M208 1112q0-20 30-18q30 6 24 30q-20 16-30 8q20-10-4-10q-20 6-20-10z"/>
            <path d="M478 1010q0-20 18-20q14 2 18 20l0 38q-10 16-24 0q-12-10-12-38zM460 1046q0 38 44 38q40-10 38-40h-10q-4 30-30 30q-30 0-32-26zM504 1084l8 28l8-2l-4-26"/>
            <path d="M180 1150q40-20 74 20M180 1150l-6 32M370 1182q50-60 74-46q8 20 0 46M-74 1100l150-36q20-4 24 14l6 44q2 14-14 18l-160 40q-16 0-18-16l-4-42q0-16 16-22z"/>
            <text x="-58" y="1144" font-size="60" transform="rotate(-13 10 1130)" textLength="146" style="font-weight: 400; stroke-width: 3">09:28</text>`
    })
].join('');

define('chat-wallpaper', `
    <style>
        :host { display: block; background: #7acba5; overflow: hidden; }
        svg { display: block; width: 1228px; height: 762px; fill: none; stroke: #94d5b6; stroke-width: 4.6; stroke-linejoin: round; stroke-linecap: round; }
        text { font-family: "Open Sans", sans-serif; font-weight: 700; stroke-width: 3.5; }
    </style>
    <svg viewBox="36 186 3684 2286" aria-hidden="true">
        <g id="tile">${doodles}</g>
        <use href="#tile" x="-1784"/>
        <use href="#tile" x="1784"/>
        <use href="#tile" x="3568"/>
    </svg>`);

// ---------- text squeezed or stretched to a known width ----------

define('fit-text', `
    <style>
        :host { display: block; white-space: nowrap; }
        span { display: inline-block; transform-origin: 0 50%; }
    </style>
    <span><slot></slot></span>`,
(el, root) => {
    const width = Number(el.getAttribute('width'));
    const span = root.querySelector('span');
    el.style.width = width + 'px';
    el.style.direction = 'ltr';
    const fit = () => {
        const real = span.offsetWidth;
        if (real) span.style.transform = `scaleX(${width / real})`;
    };
    fit();
    requestAnimationFrame(fit);
});

// ---------- messages ----------

define('check-marks', `
    <style>
        :host { display: block; width: 18px; height: 12px; color: #53bdeb; }
        :host([sent]) { color: #8696a0; }
        svg { display: block; }
    </style>
    <svg width="18" height="12" viewBox="0 0 18 12" fill="none" stroke="currentColor" stroke-width="1.8">
        <path d="M.7 5.8l3.6 4L11.7.4M7.6 7.9l2 1.8L17.2.4"/>
    </svg>`);

define('message-bubble', (el) => {
    const out = el.hasAttribute('out');
    const textWidth = el.getAttribute('text-width');
    const quoteText = el.getAttribute('quote');
    return `
    <style>
        :host { display: flex; justify-content: ${out ? 'flex-end' : 'flex-start'}; padding: 0 69px; margin-top: 13px; flex: none; }
        .bubble {
            position: relative;
            box-sizing: border-box;
            width: ${el.getAttribute('width')}px;
            height: ${el.getAttribute('height') || 57}px;
            padding: 4px;
            display: flex;
            flex-direction: column;
            border-radius: 7.5px;
            background: ${out ? '#d9fdd3' : '#fff'};
            box-shadow: 0 1px 0.5px rgba(11, 20, 26, .15);
        }
        .tail { position: absolute; top: 0; ${out ? 'right: -8px' : 'left: -8px'}; display: none; color: ${out ? '#d9fdd3' : '#fff'}; }
        :host([tail]) .tail { display: block; }
        :host([tail]) .bubble { border-top-${out ? 'right' : 'left'}-radius: 0; }
        .text { margin-top: var(--text-shift, 0px); font-size: 16px; line-height: 26px; height: 26px; padding: 0 4px 0 0; display: flex; justify-content: flex-end; direction: ltr; }
        .text bdi { font-family: "Open Sans", "Noto Sans Arabic", "DejaVu Sans", sans-serif; }
        .meta { margin: auto 0 var(--time-shift, 0px); padding: 0 ${out ? 4 : 5}px 0 0; height: 15px; display: flex; justify-content: flex-end; align-items: center; font-size: 12px; line-height: 15px; color: #667781; }
        .meta check-marks { margin: 0 0 0 3px; }
        .quote { display: flex; height: 59px; margin-bottom: 4px; border-radius: 6px; overflow: hidden; background: #d1f4cc; border-left: 4px solid #53bdeb; box-sizing: border-box; flex: none; }
        .quote div { padding: 5px 0 0 9px; color: #667781; font-size: 15px; line-height: 25px; }
        .quote b { display: block; font-weight: 600; font-size: 13.5px; line-height: 22px; color: #53bdeb; }
    </style>
    <div class="bubble">
        <svg class="tail" width="8" height="13" viewBox="0 0 8 13"><path fill="currentColor" d="${out ? 'M0 0h6.5q2.2 0 .9 1.8L0 11.5z' : 'M8 0H1.5Q-.7 0 .6 1.8L8 11.5z'}"/></svg>
        ${quoteText ? `<div class="quote"><div><b><fit-text width="24">You</fit-text></b><fit-text width="95"><bdi dir="rtl">${quoteText}</bdi></fit-text></div></div>` : ''}
        <div class="text"><fit-text width="${textWidth}"><bdi dir="rtl">${el.textContent}</bdi></fit-text></div>
        <div class="meta">
            <fit-text width="${el.getAttribute('time-width') || 43}">${el.getAttribute('time')}</fit-text>
            ${out ? `<check-marks${el.hasAttribute('sent') ? ' sent' : ''}></check-marks>` : ''}
        </div>
    </div>`;
});

define('date-chip', `
    <style>
        :host { display: flex; justify-content: center; margin-top: 13px; flex: none; }
        div { width: 97px; height: 35px; display: flex; align-items: center; justify-content: center; border-radius: 7.5px; background: rgba(255, 255, 255, .96); box-shadow: 0 1px .5px rgba(11, 20, 26, .15); font-size: 14px; color: #54656f; }
    </style>
    <div><fit-text width="70"></fit-text></div>`,
(el, root) => { root.querySelector('fit-text').textContent = el.textContent; });

define('reaction-button', `
    <style>
        :host { position: absolute; left: 1031px; top: -5px; width: 28px; height: 28px; }
        svg { display: block; }
    </style>
    <svg width="28" height="28" viewBox="0 0 28 28">
        <circle cx="14" cy="14" r="14" fill="#0b141a" opacity=".26"/>
        <circle cx="14" cy="14" r="8.2" fill="#fff"/>
        <g fill="#5b9b7f"><circle cx="11.2" cy="12.3" r="1.3"/><circle cx="16.8" cy="12.3" r="1.3"/><path d="M9.3 15.1q4.7 1.4 9.4 0q-1.2 3.7-4.7 3.7t-4.7-3.7z"/></g>
    </svg>`);

define('message-list', `
    <style>
        :host { position: relative; display: grid; overflow: hidden; }
        chat-wallpaper, .rows { grid-area: 1 / 1; min-height: 0; }
        .rows { position: relative; display: flex; flex-direction: column; justify-content: flex-end; padding: 0 3px 23px 0; overflow: hidden; }
        .raised { --text-shift: -1px; }
        .lowered { --time-shift: -1px; }
        .track { position: absolute; top: 0; right: 0; width: 3px; height: 100%; background: rgba(255, 255, 255, .1); }
        .thumb { position: absolute; bottom: 0; right: 0; width: 3px; height: 310px; background: rgba(11, 20, 26, .2); }
    </style>
    <chat-wallpaper></chat-wallpaper>
    <div class="rows">
        <message-bubble class="raised" out width="91" text-width="28" time="5:06 pm">تمام</message-bubble>
        <message-bubble class="lowered" tail width="167" text-width="148" time="5:45 pm">ما اتبعتش ليا اي لينكات</message-bubble>
        <message-bubble class="raised" out tail width="165" text-width="146" time="5:45 pm" style="margin-top: 14px">برسلها لحضرتك لحظات</message-bubble>
        <message-bubble out width="120" text-width="102" time="6:00 pm" style="margin-top: 2px">وصل لحضرتك ؟</message-bubble>
        <date-chip>16/03/2023</date-chip>
        <message-bubble class="raised" out tail width="96" text-width="68" time="10:39 am" time-width="48" style="margin-top: 14px">صباح الخير</message-bubble>
        <message-bubble class="raised" out width="129" height="120" text-width="102" time="10:40 am" time-width="48" style="margin-top: 2px" quote="وصل لحضرتك ؟">وصل لحضرتك ؟</message-bubble>
        <date-chip>09/04/2023</date-chip>
        <message-bubble out tail width="475" height="58" text-width="457" time="11:18 am" time-width="48">صباح الخير يا فندم بأكد مع حضرتك موعد البدء ان شاءالله 15/4 ان شاءالله</message-bubble>
        <message-bubble class="raised" tail width="372" text-width="353" time="5:42 pm">معلشي ممكن ناجل لبعد العيد بس عشان اظبط مواعيدي</message-bubble>
        <message-bubble class="lowered" out tail sent width="111" text-width="93" time="5:54 pm">تمام ان شاءالله</message-bubble>
    </div>
    <reaction-button></reaction-button>
    <div class="track"></div>
    <div class="thumb"></div>`);

// ---------- header, composer, side strip ----------

define('contact-avatar', `
    <style>
        :host { display: block; width: 42px; height: 42px; }
        svg { display: block; }
        text { font-family: "Open Sans", sans-serif; font-weight: 700; }
    </style>
    <svg width="42" height="42" viewBox="0 0 42 42">
        <defs><linearGradient id="ring" x1="1" y1="0" x2="0" y2="1"><stop offset="0" stop-color="#fdb924"/><stop offset=".2" stop-color="#ffd02e"/><stop offset=".32" stop-color="#ee5a3c"/><stop offset=".6" stop-color="#f06a45"/><stop offset=".85" stop-color="#ffd02e"/><stop offset="1" stop-color="#fdb924"/></linearGradient></defs>
        <circle cx="21" cy="21" r="21" fill="#fff"/>
        <circle cx="21" cy="21" r="19.4" fill="none" stroke="url(#ring)" stroke-width="1.8"/>
        <path d="M22 8h13.5v2.4H25.6l-1 3.6H35v2.4h-7.2v9h-2.6v-6.4L21 25.2h-3.4L21.6 16z" fill="#ee4f31"/>
        <path d="M19.8 7.8q-8 4.6-9 11.2l.8 7.5 1.4 0-.5-5.2q3.6-.2 4.5-4.5l-1.4.2 3.2-3.4-1.2-.1q2-2.9 2.2-5.7z" fill="#17214d"/>
        <path d="M12.4 21.5q3.2-4 5-8" stroke="#fff" stroke-width=".5" fill="none"/>
        <text x="14.5" y="28.6" font-size="4.5" fill="#f5a79a" textLength="9" lengthAdjust="spacingAndGlyphs">Civil</text>
        <text x="7" y="32.3" font-size="3.4" fill="#4a4f72" textLength="27" lengthAdjust="spacingAndGlyphs">Abdelfatah Osman</text>
    </svg>`);

define('chat-header', `
    <style>
        :host { display: flex; align-items: center; box-sizing: border-box; padding: 0 0 4px 19px; background: #f0f2f5; border-bottom: 1px solid #e0e5e5; color: #54656f; }
        fit-text { margin-left: 17px; flex: none; font-size: 18px; line-height: 24px; color: #111b21; padding-top: 1px; }
        .icons { margin-left: auto; display: flex; align-items: center; gap: 31px; padding-right: 25px; padding-top: 2px; }
        svg { display: block; }
    </style>
    <contact-avatar></contact-avatar>
    <fit-text width="207">Abdelfatah Osman Abroad</fit-text>
    <div class="icons">
        <svg width="24" height="24" viewBox="0 0 24 24" fill="none" stroke="currentColor"><circle cx="10" cy="9.2" r="6.6" stroke-width="2"/><path d="M14.8 14.1l6.4 6.6" stroke-width="2.7"/></svg>
        <svg width="24" height="24" viewBox="0 0 24 24" fill="currentColor"><circle cx="12.4" cy="4.8" r="2.3"/><circle cx="12.4" cy="11.5" r="2.3"/><circle cx="12.4" cy="18.1" r="2.3"/></svg>
    </div>`);

define('chat-composer', `
    <style>
        :host { display: flex; align-items: center; box-sizing: border-box; padding: 3px 24px 0 26px; background: #f0f2f5; color: #54656f; }
        svg { display: block; flex: none; }
        .clip { margin-left: 17px; }
        .field { flex: 1; height: 46px; margin: 0 17px 0 18px; display: flex; align-items: center; box-sizing: border-box; padding: 0 19px 0 14px; border-radius: 8px; background: #fff; }
        .caret { width: 1px; height: 22px; background: #3b4a54; margin: 0 4px 0 0; }
        fit-text { font-size: 16.5px; line-height: 24px; color: #707e87; padding-top: 1px; }
        .dot { width: 8px; height: 8px; border-radius: 50%; background: #008373; margin: 8px 0 0 auto; }
        .mic { margin-right: -1px; }
    </style>
    <svg width="28" height="28" viewBox="0 0 28 28" fill="none" stroke="currentColor"><circle cx="14.5" cy="14" r="12.4" stroke-width="1.9"/><g fill="currentColor" stroke="none"><ellipse cx="10.7" cy="10.8" rx="1.9" ry="2.3"/><ellipse cx="18.3" cy="10.8" rx="1.9" ry="2.3"/><path d="M7 14.8q7.5 1.7 15 0q-1.2 6.2-7.5 6.2t-7.5-6.2z"/></g><path d="M9 17.2q5.5 1 11 0" stroke="#f0f2f5" stroke-width="1.2"/></svg>
    <svg class="clip" width="28" height="28" viewBox="0 0 28 28" fill="none" stroke="currentColor" stroke-width="1.8" stroke-linecap="round"><path d="M23.8 12.4L14 21.8q-3.9 3.2-7.1.2-3-3.4.2-7L16.8 5.6q2.9-2.2 5.1-.1 2.1 2.4 0 4.9l-8.4 8.1q-1.8 1.5-3.3.2-1.3-1.7.2-3.3l6.8-6.5" transform="rotate(2 14 14)"/></svg>
    <div class="field">
        <div class="caret"></div>
        <fit-text width="115">Type a message</fit-text>
        <div class="dot"></div>
    </div>
    <svg class="mic" width="27" height="26" viewBox="0 0 27 26" fill="none" stroke="currentColor"><rect x="9.6" y="1" width="8" height="15" rx="4" fill="currentColor" stroke="none"/><path d="M5 12q.4 7.4 8.6 7.9 8.2-.5 8.6-7.9M13.6 20v5" stroke-width="2.2"/></svg>`);

define('side-strip', `
    <style>
        :host { display: flex; flex-direction: column; box-sizing: border-box; background: #fff; border-right: 1px solid #e6eaec; }
        .top { height: 62px; background: #f0f2f5; margin-right: -1px; border-right: 1px solid #ced3d8; flex: none; }
        .search { height: 54px; flex: none; border-bottom: 1px solid #e9edef; box-shadow: 0 1px 2px rgba(11, 20, 26, .06); }
        .row { height: 77px; flex: none; }
        .row.active { height: 79px; background: #f0f2f5; border-bottom: 1px solid #e9edef; }
    </style>
    <div class="top"></div>
    <div class="search"></div>
    <div class="row"></div>
    <div class="row active"></div>`);

define('chat-app', `
    <style>
        :host { display: grid; grid-template-columns: 12px 1228px; grid-template-rows: 62.5px 761.5px 65px; width: 1240px; height: 889px; overflow: hidden; background: #fff; }
        side-strip { grid-row: 1 / 4; }
    </style>
    <side-strip></side-strip>
    <chat-header></chat-header>
    <message-list></message-list>
    <chat-composer></chat-composer>`);
</script>
</body>
</html>
